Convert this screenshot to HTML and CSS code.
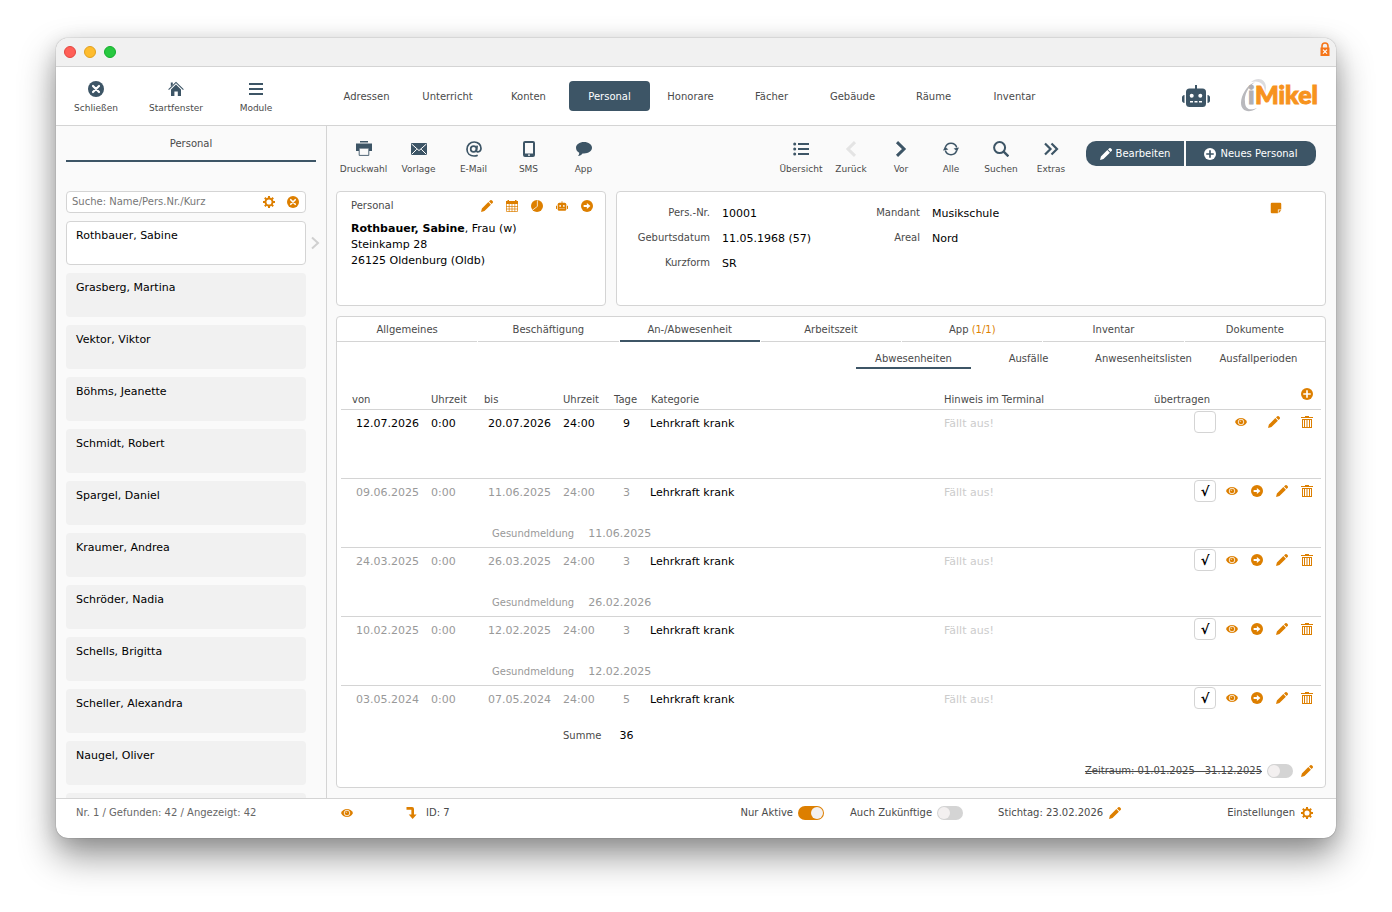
FILE: index.html
```html
<!DOCTYPE html>
<html lang="de">

<head>
    <meta charset="UTF-8">
    <meta name="viewport" content="width=device-width, initial-scale=1.0">
    <title>iMikel - Personal</title>
    <link rel="stylesheet" href="styles.css">
</head>

<body>
    <!-- Icons -->
    <svg class="sprite" aria-hidden="true">
        <symbol id="i-close" viewBox="0 0 16 16"><circle cx="8" cy="8" r="8" /><path class="cut" d="M5 5l6 6M11 5l-6 6" stroke-width="2.2" stroke-linecap="round" /></symbol>
        <symbol id="i-home" viewBox="0 0 16 16"><path d="M8 3.6l5 4.8V15H9.8v-4.4H6.4V15H3V8.4zM2.8 1.6h2v2.2l-2 1.8z" /><path class="line" d="M.6 8.6L8 1.4l7.4 7.2" stroke-width="1.1" /></symbol>
        <symbol id="i-menu" viewBox="0 0 16 16"><path class="line" d="M1 3h14M1 8h14M1 13h14" stroke-width="1.9" /></symbol>
        <symbol id="i-print" viewBox="0 0 16 16"><path d="M4 0h8v1.6H4zM0 2.6h16V10h-3V7H3v3H0z" /><path class="line" d="M3.2 7.2h9.6v7.2H3.2z" stroke-width=".9" /></symbol>
        <symbol id="i-mail" viewBox="0 0 16 16"><path d="M0 2h16v12H0z" /><path class="cut" d="M.6 3L8 9.6 15.4 3M.6 13.4l5.2-5.2M15.4 13.4l-5.2-5.2" stroke-width="1" /></symbol>
        <symbol id="i-at" viewBox="0 0 16 16"><circle class="line" cx="7.6" cy="8" r="2.9" stroke-width="1.7" /><path class="line" d="M11.2 4.6l-.8 5c-.1 2.2 4.6 1.8 4.6-2.4C15 3.6 12 1 8.2 1 4 1 1 4.1 1 8.2 1 12.3 4 15 8 15c1.5 0 2.7-.3 3.7-.8" stroke-width="1.7" /></symbol>
        <symbol id="i-phone" viewBox="0 0 16 16"><path fill-rule="evenodd" d="M4 0h8a2 2 0 0 1 2 2v12a2 2 0 0 1-2 2H4a2 2 0 0 1-2-2V2a2 2 0 0 1 2-2zm0 2v10.500h8V2zm3 11.500v1.200h2v-1.200z" /></symbol>
        <symbol id="i-chat" viewBox="0 0 16 16"><path d="M8 1c4.500 0 8 2.500 8 5.800s-3.500 5.700-8 5.700l-1.500-.1C5.500 13.800 4 14.800 2 15c.9-.9 1.300-2 1.200-3.200C1.200 10.700 0 9 0 6.800 0 3.500 3.500 1 8 1z" /></symbol>
        <symbol id="i-list" viewBox="0 0 16 16"><path class="line" d="M5 3h11M5 8h11M5 13h11" stroke-width="1.9" /><circle cx="1.7" cy="3" r="1.5" /><circle cx="1.7" cy="8" r="1.5" /><circle cx="1.7" cy="13" r="1.5" /></symbol>
        <symbol id="i-left" viewBox="0 0 16 16"><path class="line" d="M12 1.2L5 8l7 6.800" stroke-width="3" /></symbol>
        <symbol id="i-right" viewBox="0 0 16 16"><path class="line" d="M4 1.2L11 8l-7 6.800" stroke-width="3" /></symbol>
        <symbol id="i-chevron" viewBox="0 0 16 16"><path class="line" d="M5 2.500L11 8l-6 5.500" stroke-width="2" /></symbol>
        <symbol id="i-refresh" viewBox="0 0 16 16"><path class="line" d="M2.300 6.600A6 6 0 0 1 13.700 6.400M13.700 9.600A6 6 0 0 1 2.300 9.600" stroke-width="1.500" /><path d="M10.600 7.600L16 6.600l-1.900 3.600zM5.400 8.400L0 9.400l1.900-3.600z" /></symbol>
        <symbol id="i-search" viewBox="0 0 16 16"><circle class="line" cx="6.600" cy="6.600" r="5.500" stroke-width="2" /><path class="line" d="M10.400 10.400l5 5" stroke-width="2.400" /></symbol>
        <symbol id="i-double" viewBox="0 0 16 16"><path class="line" d="M2 2.500L7.500 8 2 13.500M8.500 2.500L14 8l-5.500 5.500" stroke-width="2.200" /></symbol>
        <symbol id="i-pencil" viewBox="0 0 16 16"><path d="M0 16l1.200-4.600 8.600-8.600 3.400 3.400-8.600 8.600zM10.700 1.900l1.300-1.300a2 2 0 0 1 2.700 0l.7.7a2 2 0 0 1 0 2.700l-1.300 1.300z" /></symbol>
        <symbol id="i-plus" viewBox="0 0 16 16"><circle cx="8" cy="8" r="8" /><path class="cut" d="M8 3v10M3 8h10" stroke-width="2.200" /></symbol>
        <symbol id="i-go" viewBox="0 0 16 16"><circle cx="8" cy="8" r="8" /><path class="hole" d="M3.500 6.700h4.300V3.900L12.600 8l-4.800 4.100V9.300H3.500z" /></symbol>
        <symbol id="i-calendar" viewBox="0 0 12 12"><path d="M0 1h1.500V0H3v1h6V0h1.500v1H12v3H0z" /><path class="line" d="M.5 4v7.500h11V4M0 6.500h12M0 9h12M3.200 4v8M6 4v8M8.800 4v8" stroke-width=".7" /></symbol>
        <symbol id="i-pie" viewBox="0 0 16 16"><circle cx="8" cy="8" r="8" /><path class="cut" d="M8.500.5v8L2 13.500" stroke-width="1" /></symbol>
        <symbol id="i-eye" viewBox="0 0 16 16"><path d="M0 8c1.500-3.800 4.600-5.400 8-5.400s6.500 1.600 8 5.400c-1.500 3.800-4.600 5.400-8 5.400S1.500 11.800 0 8z" /><circle class="cut" cx="8" cy="8" r="3.700" stroke-width="1.100" /><path class="cut" d="M6.700 8A1.400 1.400 0 0 1 8.200 6.600" stroke-width=".8" /></symbol>
        <symbol id="i-trash" viewBox="0 0 12 12"><path d="M4 0h4v1h4v1H0V1h4zM1 3h10v1H1zM1 11h10v1H1zM1 3h1v9H1zM3 3h1v9H3zM5.500 3h1v9h-1zM8 3h1v9H8zM10 3h1v9h-1z" /></symbol>
        <symbol id="i-gear" viewBox="0 0 16 16"><circle class="line" cx="8" cy="8" r="4.700" stroke-width="2.600" /><path class="line" d="M8 0v3M8 13v3M0 8h3M13 8h3M2.400 2.400l2 2M11.600 11.600l2 2M2.400 13.600l2-2M11.600 4.400l2-2" stroke-width="2.600" /></symbol>
        <symbol id="i-down" viewBox="0 0 16 16"><path d="M2 0h7.500a2.500 2.500 0 0 1 2.500 2.500V10h3.500L10.200 16 5 10h3.500V3.500H2z" /></symbol>
        <symbol id="i-note" viewBox="0 0 16 16"><path d="M2.500 1h11A1.500 1.500 0 0 1 15 2.500V10h-4.500v5h-8A1.500 1.500 0 0 1 1 13.500v-11A1.500 1.500 0 0 1 2.500 1zM11.500 11H15l-3.500 4z" /></symbol>
        <symbol id="i-robot" viewBox="0 0 28 22"><path d="M13 0h2v4h-2zM0 13a2.500 2.500 0 0 1 2.500-3v8A2.500 2.500 0 0 1 0 15zM28 13a2.500 2.500 0 0 0-2.500-3v8a2.500 2.500 0 0 0 2.500-3z" /><rect x="4" y="3.500" width="20" height="18.500" rx="3.500" /><path class="hole" d="M8 16h3v1.600H8zM12.500 16h3v1.600h-3zM17 16h3v1.600h-3z" /><circle class="hole" cx="9.700" cy="10.800" r="2" /><circle class="hole" cx="18.300" cy="10.800" r="2" /></symbol>
        <symbol id="i-lock" viewBox="0 0 10 14"><path d="M.5 5.500h9V14h-9z" /><path class="line" d="M2 6V4a3 3 0 0 1 6 0v2" stroke-width="1.600" /><path class="cut" d="M3 7.700l4 4M7 7.700l-4 4" stroke-width="1.200" /></symbol>
    </svg>

    <div class="window">
        <div class="titlebar">
            <span class="dot red"></span>
            <span class="dot yellow"></span>
            <span class="dot green"></span>
            <svg class="lock"><use href="#i-lock" /></svg>
        </div>

        <header class="header">
            <div class="start">
                <button class="tool"><svg><use href="#i-close" /></svg>Schließen</button>
                <button class="tool"><svg><use href="#i-home" /></svg>Startfenster</button>
                <button class="tool"><svg><use href="#i-menu" /></svg>Module</button>
            </div>
            <nav class="modules">
                <a href="#">Adressen</a>
                <a href="#">Unterricht</a>
                <a href="#">Konten</a>
                <a href="#" class="active">Personal</a>
                <a href="#">Honorare</a>
                <a href="#">Fächer</a>
                <a href="#">Gebäude</a>
                <a href="#">Räume</a>
                <a href="#">Inventar</a>
            </nav>
            <button class="robot" aria-label="Assistent"><svg><use href="#i-robot" /></svg></button>
            <svg class="logo" viewBox="0 0 78 36" role="img" aria-label="iMikel">
                <path d="M15 4C7 7 1 17 1 25c0 8 8 11 16 5-7 3-12 1-12-6C4 17 8 9 15 4z" fill="#b9b9bd" />
                <path d="M11 4c6-5 15-4 15 6l-1 5c0-9-5-13-14-11z" fill="#dcdcdf" />
                <text x="8" y="26" class="logo-i">i</text>
                <text x="15" y="26" class="logo-text">Mikel</text>
            </svg>
        </header>

        <div class="content">
            <aside class="sidebar">
                <h2>Personal</h2>
                <div class="search">
                    <input type="text" placeholder="Suche: Name/Pers.Nr./Kurz" aria-label="Suche">
                    <button class="icon" aria-label="Sucheinstellungen"><svg><use href="#i-gear" /></svg></button>
                    <button class="icon" aria-label="Suche leeren"><svg><use href="#i-close" /></svg></button>
                </div>
                <ul class="people">
                    <li class="selected"><a href="#">Rothbauer, Sabine</a><svg class="chevron"><use href="#i-chevron" /></svg></li>
                    <li><a href="#">Grasberg, Martina</a></li>
                    <li><a href="#">Vektor, Viktor</a></li>
                    <li><a href="#">Böhms, Jeanette</a></li>
                    <li><a href="#">Schmidt, Robert</a></li>
                    <li><a href="#">Spargel, Daniel</a></li>
                    <li><a href="#">Kraumer, Andrea</a></li>
                    <li><a href="#">Schröder, Nadia</a></li>
                    <li><a href="#">Schells, Brigitta</a></li>
                    <li><a href="#">Scheller, Alexandra</a></li>
                    <li><a href="#">Naugel, Oliver</a></li>
                    <li></li>
                </ul>
            </aside>

            <main class="main">
                <div class="toolbar">
                    <div class="group wide">
                        <button class="tool"><svg><use href="#i-print" /></svg>Druckwahl</button>
                        <button class="tool"><svg><use href="#i-mail" /></svg>Vorlage</button>
                        <button class="tool"><svg><use href="#i-at" /></svg>E-Mail</button>
                        <button class="tool"><svg><use href="#i-phone" /></svg>SMS</button>
                        <button class="tool"><svg><use href="#i-chat" /></svg>App</button>
                    </div>
                    <div class="group">
                        <button class="tool"><svg><use href="#i-list" /></svg>Übersicht</button>
                        <button class="tool off"><svg><use href="#i-left" /></svg>Zurück</button>
                        <button class="tool"><svg><use href="#i-right" /></svg>Vor</button>
                        <button class="tool"><svg><use href="#i-refresh" /></svg>Alle</button>
                        <button class="tool"><svg><use href="#i-search" /></svg>Suchen</button>
                        <button class="tool"><svg><use href="#i-double" /></svg>Extras</button>
                    </div>
                    <div class="actions">
                        <button class="btn edit"><svg><use href="#i-pencil" /></svg>Bearbeiten</button>
                        <button class="btn new"><svg><use href="#i-plus" /></svg>Neues Personal</button>
                    </div>
                </div>

                <div class="cards">
                    <section class="card person">
                        <div class="person-head">
                            <span>Personal</span>
                            <button class="icon" aria-label="Bearbeiten"><svg><use href="#i-pencil" /></svg></button>
                            <button class="icon" aria-label="Kalender"><svg><use href="#i-calendar" /></svg></button>
                            <button class="icon" aria-label="Auswertung"><svg><use href="#i-pie" /></svg></button>
                            <button class="icon" aria-label="Assistent"><svg><use href="#i-robot" /></svg></button>
                            <button class="icon" aria-label="Öffnen"><svg><use href="#i-go" /></svg></button>
                        </div>
                        <address>
                            <b>Rothbauer, Sabine</b>, Frau (w)<br>
                            Steinkamp 28<br>
                            26125 Oldenburg (Oldb)
                        </address>
                    </section>
                    <section class="card details">
                        <dl>
                            <dt>Pers.-Nr.</dt><dd>10001</dd>
                            <dt>Geburtsdatum</dt><dd>11.05.1968 (57)</dd>
                            <dt>Kurzform</dt><dd>SR</dd>
                        </dl>
                        <dl class="second">
                            <dt>Mandant</dt><dd>Musikschule</dd>
                            <dt>Areal</dt><dd>Nord</dd>
                        </dl>
                        <button class="icon note" aria-label="Notiz"><svg><use href="#i-note" /></svg></button>
                    </section>
                </div>

                <section class="card absences">
                    <nav class="tabs">
                        <a href="#">Allgemeines</a>
                        <a href="#">Beschäftigung</a>
                        <a href="#" class="active">An-/Abwesenheit</a>
                        <a href="#">Arbeitszeit</a>
                        <a href="#">App <span>(1/1)</span></a>
                        <a href="#">Inventar</a>
                        <a href="#">Dokumente</a>
                    </nav>
                    <nav class="subtabs">
                        <a href="#" class="active">Abwesenheiten</a>
                        <a href="#">Ausfälle</a>
                        <a href="#">Anwesenheitslisten</a>
                        <a href="#">Ausfallperioden</a>
                    </nav>
                    <table>
                        <colgroup>
                            <col class="c-from">
                            <col class="c-time">
                            <col class="c-to">
                            <col class="c-time">
                            <col class="c-days">
                            <col>
                            <col class="c-hint">
                            <col class="c-sent">
                            <col class="c-icons">
                        </colgroup>
                        <thead>
                            <tr>
                                <th class="from">von</th>
                                <th>Uhrzeit</th>
                                <th>bis</th>
                                <th>Uhrzeit</th>
                                <th class="days">Tage</th>
                                <th>Kategorie</th>
                                <th>Hinweis im Terminal</th>
                                <th class="sent">übertragen</th>
                                <th><div class="icons"><button class="icon" aria-label="Neue Abwesenheit"><svg><use href="#i-plus" /></svg></button></div></th>
                            </tr>
                        </thead>
                        <tbody class="current">
                            <tr>
                                <td class="date from">12.07.2026</td>
                                <td>0:00</td>
                                <td class="date">20.07.2026</td>
                                <td>24:00</td>
                                <td class="days">9</td>
                                <td class="cat">Lehrkraft krank</td>
                                <td class="hint">Fällt aus!</td>
                                <td class="sent"><input type="checkbox" aria-label="übertragen"></td>
                                <td>
                                    <div class="icons">
                                        <button class="icon" aria-label="Anzeigen"><svg><use href="#i-eye" /></svg></button>
                                        <button class="icon" aria-label="Bearbeiten"><svg><use href="#i-pencil" /></svg></button>
                                        <button class="icon" aria-label="Löschen"><svg><use href="#i-trash" /></svg></button>
                                    </div>
                                </td>
                            </tr>
                            <tr class="health">
                                <td colspan="9"></td>
                            </tr>
                        </tbody>
                        <tbody>
                            <tr>
                                <td class="date from">09.06.2025</td>
                                <td>0:00</td>
                                <td class="date">11.06.2025</td>
                                <td>24:00</td>
                                <td class="days">3</td>
                                <td class="cat">Lehrkraft krank</td>
                                <td class="hint">Fällt aus!</td>
                                <td class="sent"><input type="checkbox" aria-label="übertragen" checked></td>
                                <td>
                                    <div class="icons">
                                        <button class="icon" aria-label="Anzeigen"><svg><use href="#i-eye" /></svg></button>
                                        <button class="icon" aria-label="Öffnen"><svg><use href="#i-go" /></svg></button>
                                        <button class="icon" aria-label="Bearbeiten"><svg><use href="#i-pencil" /></svg></button>
                                        <button class="icon" aria-label="Löschen"><svg><use href="#i-trash" /></svg></button>
                                    </div>
                                </td>
                            </tr>
                            <tr class="health">
                                <td colspan="2"></td>
                                <td colspan="7"><span>Gesundmeldung</span>11.06.2025</td>
                            </tr>
                        </tbody>
                        <tbody>
                            <tr>
                                <td class="date from">24.03.2025</td>
                                <td>0:00</td>
                                <td class="date">26.03.2025</td>
                                <td>24:00</td>
                                <td class="days">3</td>
                                <td class="cat">Lehrkraft krank</td>
                                <td class="hint">Fällt aus!</td>
                                <td class="sent"><input type="checkbox" aria-label="übertragen" checked></td>
                                <td>
                                    <div class="icons">
                                        <button class="icon" aria-label="Anzeigen"><svg><use href="#i-eye" /></svg></button>
                                        <button class="icon" aria-label="Öffnen"><svg><use href="#i-go" /></svg></button>
                                        <button class="icon" aria-label="Bearbeiten"><svg><use href="#i-pencil" /></svg></button>
                                        <button class="icon" aria-label="Löschen"><svg><use href="#i-trash" /></svg></button>
                                    </div>
                                </td>
                            </tr>
                            <tr class="health">
                                <td colspan="2"></td>
                                <td colspan="7"><span>Gesundmeldung</span>26.02.2026</td>
                            </tr>
                        </tbody>
                        <tbody>
                            <tr>
                                <td class="date from">10.02.2025</td>
                                <td>0:00</td>
                                <td class="date">12.02.2025</td>
                                <td>24:00</td>
                                <td class="days">3</td>
                                <td class="cat">Lehrkraft krank</td>
                                <td class="hint">Fällt aus!</td>
                                <td class="sent"><input type="checkbox" aria-label="übertragen" checked></td>
                                <td>
                                    <div class="icons">
                                        <button class="icon" aria-label="Anzeigen"><svg><use href="#i-eye" /></svg></button>
                                        <button class="icon" aria-label="Öffnen"><svg><use href="#i-go" /></svg></button>
                                        <button class="icon" aria-label="Bearbeiten"><svg><use href="#i-pencil" /></svg></button>
                                        <button class="icon" aria-label="Löschen"><svg><use href="#i-trash" /></svg></button>
                                    </div>
                                </td>
                            </tr>
                            <tr class="health">
                                <td colspan="2"></td>
                                <td colspan="7"><span>Gesundmeldung</span>12.02.2025</td>
                            </tr>
                        </tbody>
                        <tbody>
                            <tr>
                                <td class="date from">03.05.2024</td>
                                <td>0:00</td>
                                <td class="date">07.05.2024</td>
                                <td>24:00</td>
                                <td class="days">5</td>
                                <td class="cat">Lehrkraft krank</td>
                                <td class="hint">Fällt aus!</td>
                                <td class="sent"><input type="checkbox" aria-label="übertragen" checked></td>
                                <td>
                                    <div class="icons">
                                        <button class="icon" aria-label="Anzeigen"><svg><use href="#i-eye" /></svg></button>
                                        <button class="icon" aria-label="Öffnen"><svg><use href="#i-go" /></svg></button>
                                        <button class="icon" aria-label="Bearbeiten"><svg><use href="#i-pencil" /></svg></button>
                                        <button class="icon" aria-label="Löschen"><svg><use href="#i-trash" /></svg></button>
                                    </div>
                                </td>
                            </tr>
                        </tbody>
                        <tfoot>
                            <tr>
                                <td colspan="3"></td>
                                <td>Summe</td>
                                <td class="days">36</td>
                                <td colspan="4"></td>
                            </tr>
                        </tfoot>
                    </table>
                    <div class="period">
                        <label for="zeitraum">Zeitraum: 01.01.2025 - 31.12.2025</label>
                        <input type="checkbox" class="switch" id="zeitraum">
                        <button class="icon" aria-label="Zeitraum bearbeiten"><svg><use href="#i-pencil" /></svg></button>
                    </div>
                </section>
            </main>
        </div>

        <footer class="footer">
            <span class="count">Nr. 1 / Gefunden: 42 / Angezeigt: 42</span>
            <button class="icon" aria-label="Anzeigen"><svg><use href="#i-eye" /></svg></button>
            <div class="record"><svg><use href="#i-down" /></svg>ID: 7</div>
            <div class="filters">
                <div class="filter"><label for="aktive">Nur Aktive</label><input type="checkbox" class="switch" id="aktive" checked></div>
                <div class="filter"><label for="zukunft">Auch Zukünftige</label><input type="checkbox" class="switch" id="zukunft"></div>
                <button class="link day">Stichtag: 23.02.2026<svg><use href="#i-pencil" /></svg></button>
                <button class="link">Einstellungen<svg><use href="#i-gear" /></svg></button>
            </div>
        </footer>
    </div>
</body>

</html>
```
FILE: styles.css
```css
* {
    box-sizing: border-box;
}

body {
    height: 100vh;
    margin: 0;
    padding: 38px 56px 74px;
    overflow: hidden;
    font-family: "DejaVu Sans", Verdana, sans-serif;
    font-size: 10px;
    line-height: 16px;
    color: #4a4a4a;
    background: #fff;
}

button,
input {
    font: inherit;
    color: inherit;
    border: none;
    background: none;
    padding: 0;
    margin: 0;
}

a {
    color: inherit;
    text-decoration: none;
}

ul {
    list-style: none;
    margin: 0;
    padding: 0;
}

svg {
    fill: currentColor;
    stroke: none;
    flex: none;
}

.sprite {
    display: none;
}

.line {
    fill: none;
    stroke: currentColor;
}

.cut {
    fill: none;
    stroke: var(--cut, #fff);
}

.hole {
    fill: #fff;
}

.window {
    height: 100%;
    display: flex;
    flex-direction: column;
    border-radius: 12px;
    background: #fff;
    overflow: hidden;
    box-shadow: 0 0 1px rgba(0, 0, 0, 0.6), 0 18px 36px rgba(0, 0, 0, 0.42), 0 4px 20px rgba(0, 0, 0, 0.12);
}

/* Titlebar */
.titlebar {
    flex: none;
    height: 29px;
    display: flex;
    align-items: center;
    gap: 8px;
    padding: 0 6px 0 8px;
    background: #f1f1f1;
    border-bottom: 1px solid #d4d4d4;
}

.dot {
    width: 12px;
    height: 12px;
    border-radius: 50%;
    border: 1px solid;
}

.red {
    background: #ff5f57;
    border-color: #e2463f;
}

.yellow {
    background: #febc2e;
    border-color: #e0a01e;
}

.green {
    background: #28c840;
    border-color: #14ae2c;
}

.lock {
    width: 10px;
    height: 14px;
    margin: 0 0 6px auto;
    color: #f5761a;
}

/* Header */
.header {
    flex: none;
    height: 59px;
    display: flex;
    align-items: center;
    padding-right: 18px;
    border-bottom: 1px solid #d4d4d4;
}

.start {
    width: 270px;
    display: flex;
    padding-top: 4px;
}

.start .tool {
    width: 80px;
    gap: 3px;
}

.tool {
    display: flex;
    flex-direction: column;
    align-items: center;
    gap: 4px;
    font-size: 9px;
    color: #4a4a4a;
}

.tool svg {
    width: 16px;
    height: 16px;
    color: #3d5566;
}

.off svg {
    color: #e4e4e4;
}

.modules {
    display: flex;
}

.modules a {
    width: 81px;
    height: 30px;
    line-height: 32px;
    text-align: center;
    border-radius: 4px;
}

.modules .active {
    background: #3d5566;
    color: #fff;
}

.robot {
    margin: 0 30px 0 auto;
    color: #3d5566;
}

.robot svg {
    display: block;
    width: 28px;
    height: 22px;
}

.logo {
    width: 78px;
    height: 36px;
}

.logo-i,
.logo-text {
    font-family: Lato, sans-serif;
    font-size: 25px;
    font-weight: 900;
    stroke-width: 1;
}

.logo-i {
    fill: #b0b0b4;
    stroke: #b0b0b4;
}

.logo-text {
    fill: #f7931e;
    stroke: #f7931e;
}

.content {
    flex: 1;
    min-height: 0;
    display: flex;
    background: #fafafa;
}

/* Sidebar */
.sidebar {
    flex: none;
    width: 271px;
    padding: 0 10px;
    border-right: 1px solid #d4d4d4;
    overflow: hidden;
}

.sidebar h2 {
    height: 36px;
    margin: 0 0 29px;
    font-size: 10px;
    font-weight: normal;
    line-height: 36px;
    text-align: center;
    border-bottom: 2px solid #3d5566;
}

.search {
    width: 240px;
    height: 22px;
    display: flex;
    align-items: center;
    gap: 12px;
    padding: 0 6px 0 5px;
    border: 1px solid #d4d4d4;
    border-radius: 4px;
    background: #fff;
}

.search input {
    flex: 1;
    min-width: 0;
    outline: none;
}

.search input::placeholder {
    color: #777;
}

.icon {
    display: block;
    color: #dd7f00;
    cursor: pointer;
}

.icon svg {
    display: block;
    width: 12px;
    height: 12px;
}

.people {
    width: 240px;
    margin-top: 8px;
    display: flex;
    flex-direction: column;
    gap: 8px;
}

.people li {
    position: relative;
    height: 44px;
    padding: 7px 10px;
    border-radius: 4px;
    background: #f1f1f1;
    font-size: 11px;
    color: #000;
}

.people .selected {
    padding: 6px 9px;
    background: #fff;
    border: 1px solid #d4d4d4;
}

.chevron {
    position: absolute;
    right: -18px;
    top: 13px;
    width: 16px;
    height: 16px;
    color: #d0d0d0;
}

/* Main */
.main {
    flex: 1;
    min-width: 0;
    display: flex;
    flex-direction: column;
    gap: 10px;
    padding: 0 10px 10px 9px;
}

.toolbar {
    height: 55px;
    display: flex;
    align-items: center;
}

.group {
    display: flex;
    padding-top: 10px;
}

.group .tool {
    width: 50px;
}

.wide {
    margin-right: auto;
}

.wide .tool {
    width: 55px;
}

.actions {
    display: flex;
    gap: 2px;
    margin: 0 10px;
}

.btn {
    height: 25px;
    display: flex;
    align-items: center;
    justify-content: center;
    gap: 4px;
    background: #3d5566;
    color: #fff;
    cursor: pointer;
    --cut: #3d5566;
}

.btn svg {
    width: 12px;
    height: 12px;
}

.edit {
    width: 98px;
    border-radius: 10px 0 0 10px;
}

.new {
    width: 130px;
    border-radius: 0 10px 10px 0;
}

.cards {
    display: flex;
    gap: 10px;
}

.card {
    background: #fff;
    border: 1px solid #d4d4d4;
    border-radius: 4px;
}

.person {
    width: 270px;
    height: 115px;
    padding: 6px 12px 0 14px;
}

.person-head {
    display: flex;
    align-items: center;
    gap: 13px;
    height: 16px;
    margin-bottom: 7px;
}

.person-head span {
    margin-right: auto;
}

address {
    font-size: 11px;
    font-style: normal;
    color: #000;
}

.details {
    flex: 1;
    display: flex;
    padding: 9px 43px 0 0;
}

dl {
    display: grid;
    grid-template-columns: 93px 142px;
    grid-auto-rows: 25px;
    column-gap: 12px;
    margin: 0;
}

.second {
    grid-template-columns: 56px 142px;
}

dt {
    line-height: 25px;
    text-align: right;
    margin-top: -1px;
}

dd {
    margin: 0;
    font-size: 11px;
    line-height: 25px;
    color: #000;
}

.note {
    align-self: flex-start;
    margin: 1px 0 0 auto;
}

/* An-/Abwesenheit */
.absences {
    flex: 1;
    display: flex;
    flex-direction: column;
    padding-bottom: 8px;
}

.tabs {
    display: flex;
    gap: 1px;
}

.tabs a {
    flex: 1;
    height: 25px;
    line-height: 25px;
    text-align: center;
    border-bottom: 1px solid #d4d4d4;
}

.tabs .active,
.subtabs .active {
    border-bottom: 2px solid #3d5566;
}

.tabs span {
    color: #dd7f00;
}

.subtabs {
    display: flex;
    justify-content: flex-end;
    margin: 6px 9px 14px 0;
}

.subtabs a {
    width: 115px;
    height: 21px;
    line-height: 21px;
    text-align: center;
}

table {
    table-layout: fixed;
    border-collapse: collapse;
    width: auto;
    margin: 0 4px;
}

.c-from {
    width: 84px;
}

.c-time {
    width: 53px;
}

.c-to {
    width: 79px;
}

.c-days {
    width: 35px;
}

.c-hint {
    width: 200px;
}

.c-sent {
    width: 78px;
}

.c-icons {
    width: 105px;
}

th,
td {
    padding: 0 0 0 6px;
    text-align: left;
    vertical-align: top;
}

th {
    height: 26px;
    padding-top: 9px;
    font-weight: normal;
}

th.from {
    padding-left: 11px;
}

th.days {
    padding-left: 4px;
}

td {
    height: 27px;
    padding-top: 6px;
    font-size: 11px;
    color: #999;
}

thead,
tbody {
    border-bottom: 1px solid #d4d4d4;
}

tbody:last-of-type {
    border-bottom: none;
}

td.date {
    padding-left: 10px;
}

td.from {
    padding-left: 15px;
}

td.days {
    padding: 6px 2px 0 0;
    text-align: center;
}

td.cat {
    padding-left: 5px;
}

.current td,
td.cat {
    color: #000;
}

.current .hint,
td.hint {
    color: #ccc;
}

th.sent {
    padding-right: 6px;
    text-align: right;
}

td.sent {
    padding-top: 1px;
    text-align: right;
}

td.sent input {
    appearance: none;
    display: block;
    width: 22px;
    height: 22px;
    margin-left: auto;
    border: 1px solid #d4d4d4;
    border-radius: 4px;
    background: #fff;
    text-align: center;
    line-height: 21px;
    font-size: 13px;
    font-weight: bold;
    color: #000;
}

td.sent input:checked::before {
    content: "√";
}

.icons {
    display: flex;
    justify-content: flex-end;
    gap: 13px;
    padding-right: 8px;
}

th .icons {
    margin-top: -4px;
}

.current .icons {
    gap: 21px;
}

.health td {
    height: 42px;
    padding: 21px 0 0 14px;
}

.health span {
    margin-right: 14px;
    font-size: 10px;
}

tfoot td,
tfoot td.days {
    padding-top: 16px;
    font-size: 10px;
    color: #4a4a4a;
}

tfoot td.days {
    font-size: 11px;
    color: #000;
}

.period {
    display: flex;
    align-items: center;
    justify-content: flex-end;
    gap: 5px;
    margin: auto 12px 0 0;
}

.period label {
    text-decoration: line-through;
}

.period .icon {
    margin-left: 3px;
}

.switch {
    appearance: none;
    width: 26px;
    height: 14px;
    padding: 1px;
    border-radius: 7px;
    background: #d4d4d4;
}

.switch::before {
    content: "";
    display: block;
    width: 12px;
    height: 12px;
    border-radius: 50%;
    background: #f3f0f0;
}

.switch:checked {
    background: #dd7f00;
}

.switch:checked::before {
    margin-left: auto;
}

/* Footer */
.footer {
    flex: none;
    height: 40px;
    display: flex;
    align-items: center;
    padding: 0 23px 11px 20px;
    border-top: 1px solid #d4d4d4;
}

.count {
    width: 265px;
    color: #666;
}

.record,
.filters,
.filter,
.link {
    display: flex;
    align-items: center;
}

.record {
    gap: 9px;
    margin-left: 52px;
}

.footer svg {
    width: 12px;
    height: 12px;
    color: #dd7f00;
}

.filters {
    margin-left: auto;
}

.filter {
    gap: 5px;
    margin-right: 26px;
}

.link {
    gap: 6px;
}

.day {
    margin: 0 106px 0 9px;
}
```
